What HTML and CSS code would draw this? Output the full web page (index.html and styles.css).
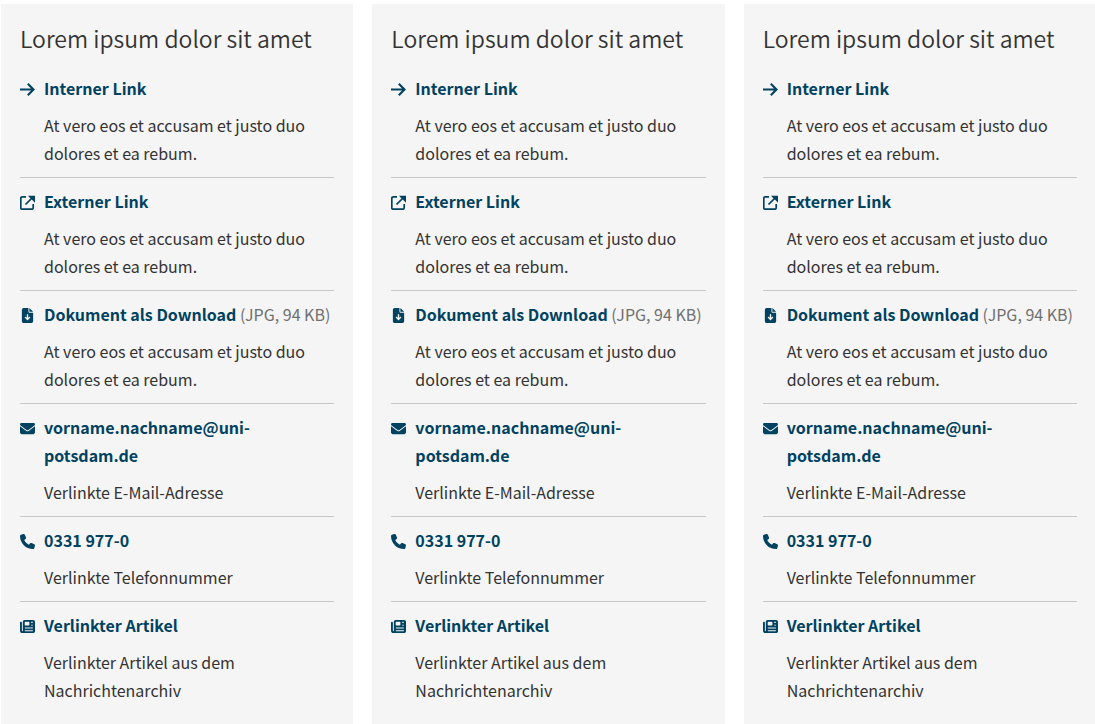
FILE: index.html
```
<!DOCTYPE html>
<html lang="de">
<head>
  <meta charset="UTF-8" />
  <meta name="viewport" content="width=device-width, initial-scale=1.0"/>
  <title>Linkliste</title>
  <link rel="stylesheet" href="styles.css">
</head>
<body>

  <svg class="sprite" aria-hidden="true">
    <symbol id="arrow" viewBox="0 0 15 15">
      <path d="M0 7.5h13.5M7.8 1.8l5.7 5.7-5.7 5.7" fill="none" stroke="currentColor" stroke-width="2.1"/>
    </symbol>
    <symbol id="external" viewBox="0 0 15 15">
      <path d="M6 1.8H2.2Q.8 1.8.8 3.2v9.6q0 1.4 1.4 1.4h9.6q1.4 0 1.4-1.4V9M5.5 9.5L13 2" fill="none" stroke="currentColor" stroke-width="1.7"/>
      <path d="M8 .8h7v7l-2.2-2.2-3-2.8z" fill="currentColor"/>
    </symbol>
    <symbol id="download" viewBox="0 0 384 512">
      <path fill="currentColor" d="M64 0C28.7 0 0 28.7 0 64V448c0 35.3 28.7 64 64 64H320c35.3 0 64-28.7 64-64V160H256c-17.7 0-32-14.3-32-32V0H64zM256 0V128H384L256 0zM216 232V334.1l31-31c9.4-9.4 24.6-9.4 33.9 0s9.4 24.6 0 33.9l-72 72c-9.4 9.4-24.6 9.4-33.9 0l-72-72c-9.4-9.4-9.4-24.6 0-33.9s24.6-9.4 33.9 0l31 31V232c0-13.3 10.7-24 24-24s24 10.7 24 24z"/>
    </symbol>
    <symbol id="mail" viewBox="0 0 512 512">
      <path fill="currentColor" d="M48 64C21.5 64 0 85.5 0 112c0 15.1 7.1 29.3 19.2 38.4L236.8 313.6c11.4 8.5 27 8.5 38.4 0L492.8 150.4c12.1-9.1 19.2-23.3 19.2-38.4c0-26.5-21.5-48-48-48H48zM0 176V384c0 35.3 28.7 64 64 64H448c35.3 0 64-28.7 64-64V176L294.4 339.2c-22.8 17.1-54 17.1-76.8 0L0 176z"/>
    </symbol>
    <symbol id="phone" viewBox="0 0 512 512">
      <path fill="currentColor" d="M164.9 24.6c-7.7-18.6-28-28.5-47.4-23.2l-88 24C12.1 30.2 0 46 0 64C0 311.4 200.6 512 448 512c18 0 33.8-12.1 38.6-29.5l24-88c5.3-19.4-4.6-39.7-23.2-47.4l-96-40c-16.3-6.8-35.2-2.1-46.3 11.6L304.7 368C234.3 334.7 177.3 277.7 144 207.3L193.3 167c13.7-11.2 18.4-30 11.6-46.3l-40-96z"/>
    </symbol>
    <symbol id="news" viewBox="0 0 512 512">
      <path fill="currentColor" d="M96 96c0-35.3 28.7-64 64-64H448c35.3 0 64 28.7 64 64V416c0 35.3-28.7 64-64 64H80c-44.2 0-80-35.8-80-80V128c0-17.7 14.3-32 32-32s32 14.3 32 32V400c0 8.8 7.2 16 16 16s16-7.2 16-16V96zm64 24v80c0 13.3 10.7 24 24 24H296c13.3 0 24-10.7 24-24V120c0-13.3-10.7-24-24-24H184c-13.3 0-24 10.7-24 24zm208-8c0 8.8 7.2 16 16 16h48c8.8 0 16-7.2 16-16s-7.2-16-16-16H384c-8.8 0-16 7.2-16 16zm0 96c0 8.8 7.2 16 16 16h48c8.8 0 16-7.2 16-16s-7.2-16-16-16H384c-8.8 0-16 7.2-16 16zM160 304c0 8.8 7.2 16 16 16H432c8.8 0 16-7.2 16-16s-7.2-16-16-16H176c-8.8 0-16 7.2-16 16zm0 96c0 8.8 7.2 16 16 16H432c8.8 0 16-7.2 16-16s-7.2-16-16-16H176c-8.8 0-16 7.2-16 16z"/>
    </symbol>
  </svg>

  <main class="columns">
    <section class="box">
      <h2>Lorem ipsum dolor sit amet</h2>
      <ul class="links">
        <li>
          <svg class="icon"><use href="#arrow"/></svg>
          <div class="entry">
            <a href="#">Interner Link</a>
            <p>At vero eos et accusam et justo duo dolores et ea rebum.</p>
          </div>
        </li>
        <li>
          <svg class="icon"><use href="#external"/></svg>
          <div class="entry">
            <a href="#">Externer Link</a>
            <p>At vero eos et accusam et justo duo dolores et ea rebum.</p>
          </div>
        </li>
        <li>
          <svg class="icon"><use href="#download"/></svg>
          <div class="entry">
            <a href="#">Dokument als Download</a> <span class="meta">(JPG, 94 KB)</span>
            <p>At vero eos et accusam et justo duo dolores et ea rebum.</p>
          </div>
        </li>
        <li>
          <svg class="icon"><use href="#mail"/></svg>
          <div class="entry">
            <a href="mailto:vorname.nachname@uni-potsdam.de">vorname.nachname@uni-<wbr>potsdam.de</a>
            <p>Verlinkte E-Mail-Adresse</p>
          </div>
        </li>
        <li>
          <svg class="icon"><use href="#phone"/></svg>
          <div class="entry">
            <a href="tel:03319770">0331 977-0</a>
            <p>Verlinkte Telefonnummer</p>
          </div>
        </li>
        <li>
          <svg class="icon"><use href="#news"/></svg>
          <div class="entry">
            <a href="#">Verlinkter Artikel</a>
            <p>Verlinkter Artikel aus dem Nachrichtenarchiv</p>
          </div>
        </li>
      </ul>
    </section>

    <section class="box">
      <h2>Lorem ipsum dolor sit amet</h2>
      <ul class="links">
        <li>
          <svg class="icon"><use href="#arrow"/></svg>
          <div class="entry">
            <a href="#">Interner Link</a>
            <p>At vero eos et accusam et justo duo dolores et ea rebum.</p>
          </div>
        </li>
        <li>
          <svg class="icon"><use href="#external"/></svg>
          <div class="entry">
            <a href="#">Externer Link</a>
            <p>At vero eos et accusam et justo duo dolores et ea rebum.</p>
          </div>
        </li>
        <li>
          <svg class="icon"><use href="#download"/></svg>
          <div class="entry">
            <a href="#">Dokument als Download</a> <span class="meta">(JPG, 94 KB)</span>
            <p>At vero eos et accusam et justo duo dolores et ea rebum.</p>
          </div>
        </li>
        <li>
          <svg class="icon"><use href="#mail"/></svg>
          <div class="entry">
            <a href="mailto:vorname.nachname@uni-potsdam.de">vorname.nachname@uni-<wbr>potsdam.de</a>
            <p>Verlinkte E-Mail-Adresse</p>
          </div>
        </li>
        <li>
          <svg class="icon"><use href="#phone"/></svg>
          <div class="entry">
            <a href="tel:03319770">0331 977-0</a>
            <p>Verlinkte Telefonnummer</p>
          </div>
        </li>
        <li>
          <svg class="icon"><use href="#news"/></svg>
          <div class="entry">
            <a href="#">Verlinkter Artikel</a>
            <p>Verlinkter Artikel aus dem Nachrichtenarchiv</p>
          </div>
        </li>
      </ul>
    </section>

    <section class="box">
      <h2>Lorem ipsum dolor sit amet</h2>
      <ul class="links">
        <li>
          <svg class="icon"><use href="#arrow"/></svg>
          <div class="entry">
            <a href="#">Interner Link</a>
            <p>At vero eos et accusam et justo duo dolores et ea rebum.</p>
          </div>
        </li>
        <li>
          <svg class="icon"><use href="#external"/></svg>
          <div class="entry">
            <a href="#">Externer Link</a>
            <p>At vero eos et accusam et justo duo dolores et ea rebum.</p>
          </div>
        </li>
        <li>
          <svg class="icon"><use href="#download"/></svg>
          <div class="entry">
            <a href="#">Dokument als Download</a> <span class="meta">(JPG, 94 KB)</span>
            <p>At vero eos et accusam et justo duo dolores et ea rebum.</p>
          </div>
        </li>
        <li>
          <svg class="icon"><use href="#mail"/></svg>
          <div class="entry">
            <a href="mailto:vorname.nachname@uni-potsdam.de">vorname.nachname@uni-<wbr>potsdam.de</a>
            <p>Verlinkte E-Mail-Adresse</p>
          </div>
        </li>
        <li>
          <svg class="icon"><use href="#phone"/></svg>
          <div class="entry">
            <a href="tel:03319770">0331 977-0</a>
            <p>Verlinkte Telefonnummer</p>
          </div>
        </li>
        <li>
          <svg class="icon"><use href="#news"/></svg>
          <div class="entry">
            <a href="#">Verlinkter Artikel</a>
            <p>Verlinkter Artikel aus dem Nachrichtenarchiv</p>
          </div>
        </li>
      </ul>
    </section>
  </main>

</body>
</html>
```
FILE: styles.css
```
:root {
  --text-color: #333;
  --link-color: #00425f;
  --meta-color: #707070;
  --box-bg: #f5f5f5;
  --line-color: #c8c8c8;
}

* { box-sizing: border-box; }

body {
  margin: 0;
  font-family: "Source Sans Pro", "Noto Sans CJK SC", sans-serif;
  font-size: 16px;
  line-height: 28px;
  color: var(--text-color);
  background: #fff;
  overflow-x: hidden;
}

.sprite {
  display: none;
}

.columns {
  display: grid;
  grid-template-columns: repeat(3, 1fr);
  gap: 19px;
  margin: 4px -1px 0 1px;
}

.box {
  background: var(--box-bg);
  padding: 18px 19px 10px;
}

.box h2 {
  margin: 0 0 11px;
  font-size: 23px;
  line-height: 32px;
  font-weight: 350;
}

.links {
  list-style: none;
  margin: 0;
  padding: 0;
}

.links li {
  display: flex;
  gap: 9px;
  padding: 9px 0 10px;
  border-bottom: 1px solid var(--line-color);
}

.links li:last-child {
  border-bottom: none;
}

.icon {
  flex: none;
  width: 15px;
  height: 15px;
  margin-top: 8px;
  color: var(--link-color);
}

.entry {
  flex: 1;
  min-width: 0;
}

.entry a {
  color: var(--link-color);
  font-weight: bold;
  text-decoration: none;
}

.entry a:hover {
  text-decoration: underline;
}

.entry p {
  margin: 9px 0 0;
}

.meta {
  color: var(--meta-color);
}

@media (max-width: 800px) {
  .columns {
    grid-template-columns: 1fr;
  }
}
```
